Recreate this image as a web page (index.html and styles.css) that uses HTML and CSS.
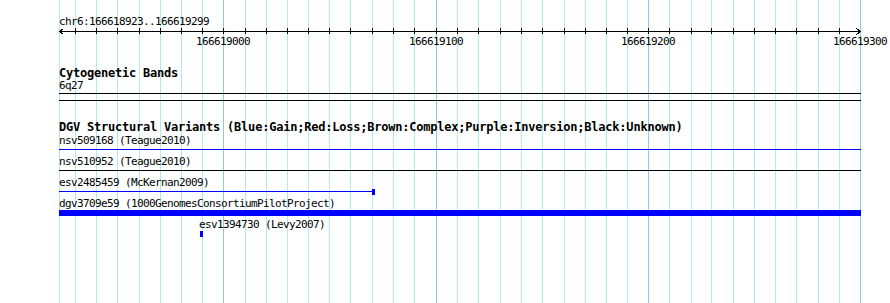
FILE: index.html
```html
<!DOCTYPE html>
<html lang="en">
<head>
    <meta charset="UTF-8">
    <title>chr6:166618923..166619299</title>
    <link rel="stylesheet" href="styles.css">
</head>
<body>
    <div class="view">
        <!-- grid, one line every 10 bp, darker every 100 bp -->
        <svg class="grid" width="890" height="303" shape-rendering="crispEdges">
            <g class="minor">
                <rect x="59" y="0" width="1" height="303"/>
                <rect x="75" y="0" width="1" height="303"/>
                <rect x="96" y="0" width="1" height="303"/>
                <rect x="117" y="0" width="1" height="303"/>
                <rect x="139" y="0" width="1" height="303"/>
                <rect x="160" y="0" width="1" height="303"/>
                <rect x="181" y="0" width="1" height="303"/>
                <rect x="202" y="0" width="1" height="303"/>
                <rect x="245" y="0" width="1" height="303"/>
                <rect x="266" y="0" width="1" height="303"/>
                <rect x="287" y="0" width="1" height="303"/>
                <rect x="308" y="0" width="1" height="303"/>
                <rect x="329" y="0" width="1" height="303"/>
                <rect x="350" y="0" width="1" height="303"/>
                <rect x="372" y="0" width="1" height="303"/>
                <rect x="393" y="0" width="1" height="303"/>
                <rect x="414" y="0" width="1" height="303"/>
                <rect x="457" y="0" width="1" height="303"/>
                <rect x="478" y="0" width="1" height="303"/>
                <rect x="500" y="0" width="1" height="303"/>
                <rect x="521" y="0" width="1" height="303"/>
                <rect x="542" y="0" width="1" height="303"/>
                <rect x="564" y="0" width="1" height="303"/>
                <rect x="585" y="0" width="1" height="303"/>
                <rect x="606" y="0" width="1" height="303"/>
                <rect x="627" y="0" width="1" height="303"/>
                <rect x="669" y="0" width="1" height="303"/>
                <rect x="691" y="0" width="1" height="303"/>
                <rect x="711" y="0" width="1" height="303"/>
                <rect x="733" y="0" width="1" height="303"/>
                <rect x="754" y="0" width="1" height="303"/>
                <rect x="775" y="0" width="1" height="303"/>
                <rect x="796" y="0" width="1" height="303"/>
                <rect x="818" y="0" width="1" height="303"/>
                <rect x="839" y="0" width="1" height="303"/>
            </g>
            <g class="major">
                <rect x="223" y="0" width="1" height="303"/>
                <rect x="436" y="0" width="1" height="303"/>
                <rect x="648" y="0" width="1" height="303"/>
                <rect x="860" y="0" width="1" height="303"/>
            </g>
        </svg>

        <div class="panel">
            <div class="ruler">
                <div class="ruler-title">chr6:166618923..166619299</div>
                <svg class="scale" width="802" height="7" shape-rendering="crispEdges">
                    <rect x="0" y="3" width="802" height="1"/>
                    <g>
                        <rect x="16" y="0" width="1" height="6"/>
                        <rect x="37" y="0" width="1" height="6"/>
                        <rect x="58" y="0" width="1" height="6"/>
                        <rect x="80" y="0" width="1" height="6"/>
                        <rect x="101" y="0" width="1" height="6"/>
                        <rect x="122" y="0" width="1" height="6"/>
                        <rect x="143" y="0" width="1" height="6"/>
                        <rect x="164" y="0" width="1" height="6"/>
                        <rect x="186" y="0" width="1" height="6"/>
                        <rect x="207" y="0" width="1" height="6"/>
                        <rect x="228" y="0" width="1" height="6"/>
                        <rect x="249" y="0" width="1" height="6"/>
                        <rect x="270" y="0" width="1" height="6"/>
                        <rect x="291" y="0" width="1" height="6"/>
                        <rect x="313" y="0" width="1" height="6"/>
                        <rect x="334" y="0" width="1" height="6"/>
                        <rect x="355" y="0" width="1" height="6"/>
                        <rect x="377" y="0" width="1" height="6"/>
                        <rect x="398" y="0" width="1" height="6"/>
                        <rect x="419" y="0" width="1" height="6"/>
                        <rect x="441" y="0" width="1" height="6"/>
                        <rect x="462" y="0" width="1" height="6"/>
                        <rect x="483" y="0" width="1" height="6"/>
                        <rect x="505" y="0" width="1" height="6"/>
                        <rect x="526" y="0" width="1" height="6"/>
                        <rect x="547" y="0" width="1" height="6"/>
                        <rect x="568" y="0" width="1" height="6"/>
                        <rect x="589" y="0" width="1" height="6"/>
                        <rect x="610" y="0" width="1" height="6"/>
                        <rect x="632" y="0" width="1" height="6"/>
                        <rect x="652" y="0" width="1" height="6"/>
                        <rect x="674" y="0" width="1" height="6"/>
                        <rect x="695" y="0" width="1" height="6"/>
                        <rect x="716" y="0" width="1" height="6"/>
                        <rect x="737" y="0" width="1" height="6"/>
                        <rect x="759" y="0" width="1" height="6"/>
                        <rect x="780" y="0" width="1" height="6"/>
                    </g>
                    <polyline points="4.5,0.5 0.5,3.5 4.5,6.5" class="arrow"/>
                    <polyline points="797.5,0.5 801.5,3.5 797.5,6.5" class="arrow"/>
                </svg>
                <div class="tick-labels">
                    <span class="tick-label" style="left:137px">166619000</span>
                    <span class="tick-label" style="left:350px">166619100</span>
                    <span class="tick-label" style="left:562px">166619200</span>
                    <span class="tick-label" style="left:774px">166619300</span>
                </div>
            </div>

            <div class="track cyto">
                <div class="track-title">Cytogenetic Bands</div>
                <div class="band-label">6q27</div>
                <div class="band"></div>
            </div>

            <div class="track dgv">
                <div class="track-title">DGV Structural Variants (Blue:Gain;Red:Loss;Brown:Complex;Purple:Inversion;Black:Unknown)</div>

                <div class="feature">
                    <div class="flabel">nsv509168 (Teague2010)</div>
                    <div class="glyph"><div class="line gain full"></div></div>
                </div>
                <div class="feature">
                    <div class="flabel">nsv510952 (Teague2010)</div>
                    <div class="glyph"><div class="line unknown full"></div></div>
                </div>
                <div class="feature">
                    <div class="flabel">esv2485459 (McKernan2009)</div>
                    <div class="glyph">
                        <div class="line gain esv2485459"></div>
                        <div class="cap gain"></div>
                    </div>
                </div>
                <div class="feature">
                    <div class="flabel">dgv3709e59 (1000GenomesConsortiumPilotProject)</div>
                    <div class="glyph"><div class="bar gain"></div></div>
                </div>
                <div class="feature">
                    <div class="flabel shifted">esv1394730 (Levy2007)</div>
                    <div class="glyph"><div class="box gain"></div></div>
                </div>
            </div>
        </div>
    </div>
</body>
</html>
```

FILE: styles.css
```css
body {
    margin: 0;
    background-color: #fff;
    color: #000;
}

.view {
    position: relative;
    width: 890px;
    height: 303px;
    overflow: hidden;
}

.grid {
    position: absolute;
    left: 0;
    top: 0;
}

.grid .minor {
    fill: #b0eaf0;
}

.grid .major {
    fill: #8ccde6;
}

.panel {
    position: relative;
    margin-left: 59px;
    width: 802px;
    font-family: "DejaVu Sans Mono", "Liberation Mono", monospace;
    font-size: 11px;
    letter-spacing: -0.62px;
    white-space: nowrap;
}

/* ruler */
.ruler-title {
    margin-top: 17px;
    height: 10px;
    line-height: 10px;
}

.scale {
    display: block;
    margin-top: 1px;
    fill: #000;
}

.scale .arrow {
    fill: none;
    stroke: #000;
    stroke-width: 1;
}

.tick-labels {
    position: relative;
    height: 13px;
    line-height: 13px;
}

.tick-label {
    position: absolute;
    top: 0;
}

/* tracks */
.track-title {
    font-size: 12px;
    font-weight: bold;
    letter-spacing: -0.22px;
    height: 13px;
    line-height: 13px;
}

.cyto {
    margin-top: 19px;
}

.band-label {
    height: 12px;
    line-height: 12px;
}

.band {
    margin-top: 1px;
    height: 6px;
    border-top: 1px solid #000;
    border-bottom: 1px solid #000;
}

.dgv {
    margin-top: 20px;
}

.feature {
    padding-top: 2px;
    padding-bottom: 2px;
}

.flabel {
    height: 9px;
    line-height: 9px;
}

.flabel.shifted {
    padding-left: 140px;
}

.glyph {
    display: flex;
    align-items: flex-start;
    margin-top: 2px;
    height: 6px;
}

.gain {
    background-color: #0000ff;
}

.unknown {
    background-color: #000;
}

.line {
    height: 1px;
    margin-top: 2px;
}

.line.full {
    width: 100%;
}

.line.esv2485459 {
    width: 313px;
}

.cap {
    width: 3px;
    height: 6px;
}

.bar {
    width: 100%;
    height: 6px;
}

.box {
    margin-left: 141px;
    width: 3px;
    height: 6px;
}
```
